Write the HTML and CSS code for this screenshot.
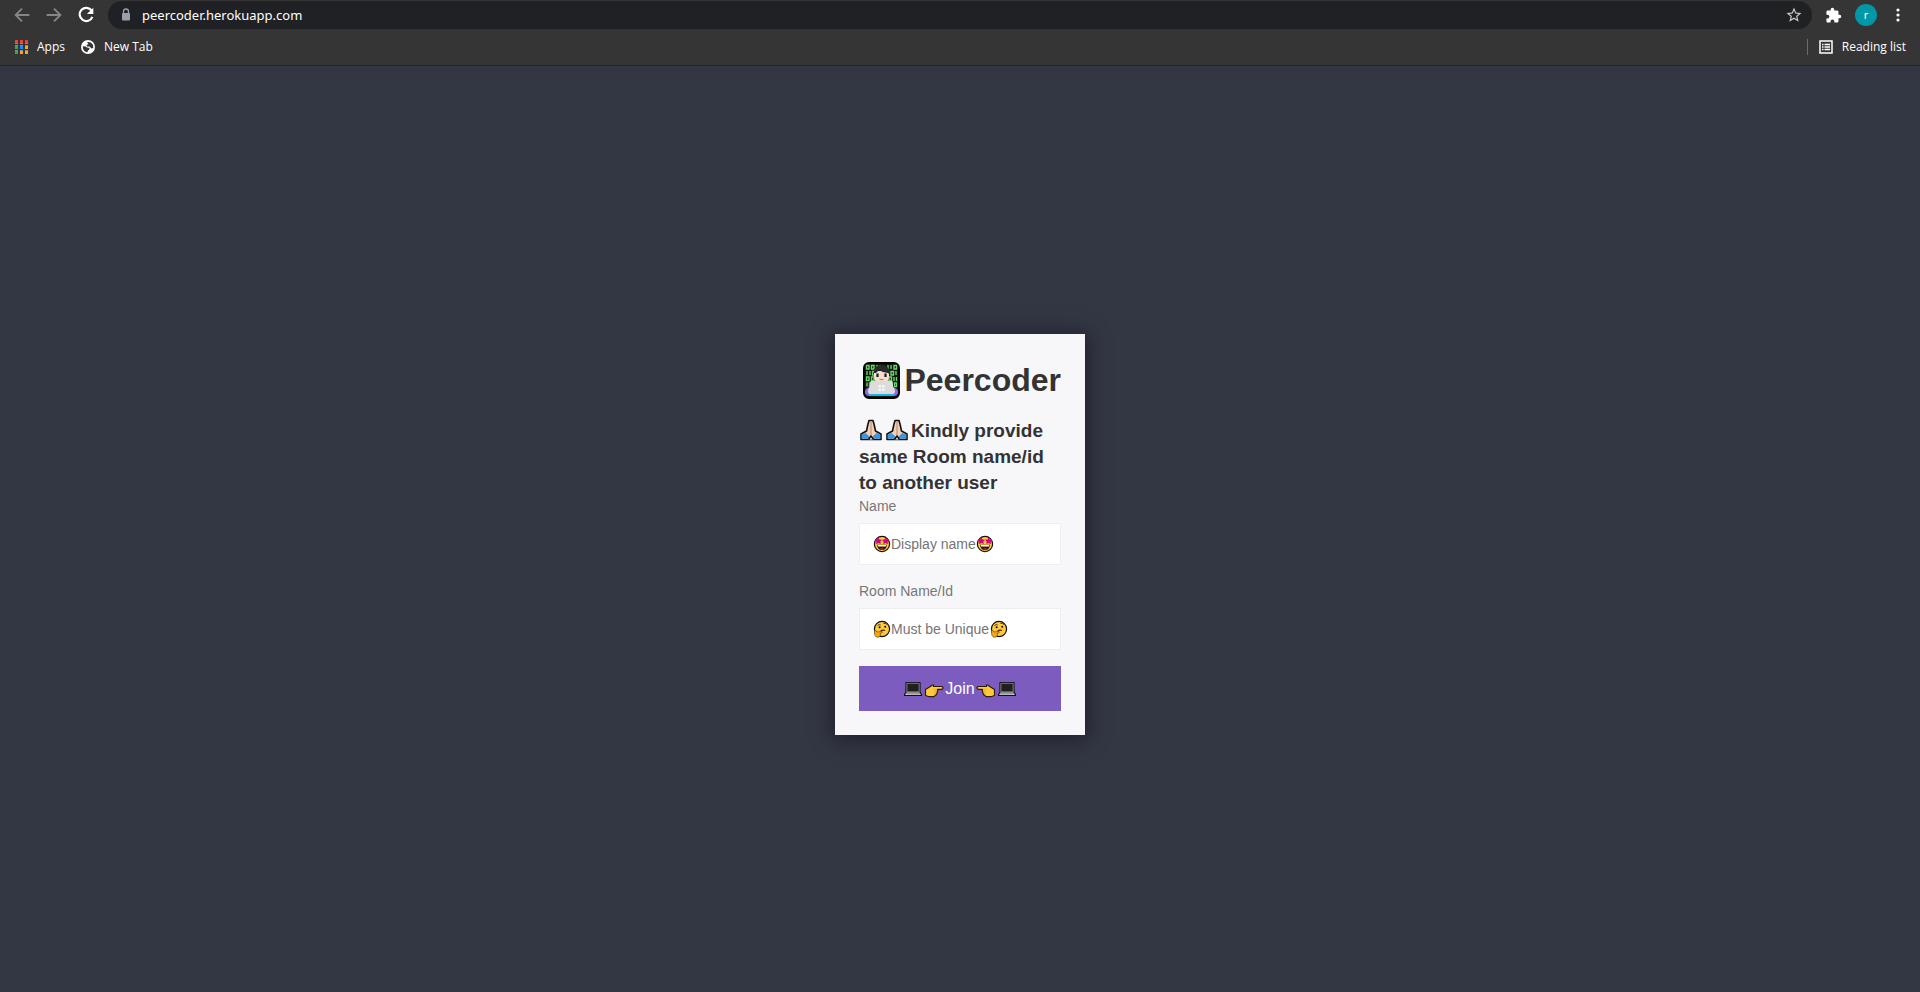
FILE: index.html
```html
<!DOCTYPE html>
<html lang="en">
<head>
<meta charset="utf-8">
<title>Peercoder</title>
<link rel="stylesheet" href="styles.css">
</head>
<body>
<svg class="defs" aria-hidden="true">
  <symbol id="hands" viewBox="0 0 22 22">
    <path d="M9 1.500H13L14 5L15.500 12L21 15V20.500H1V15L6.500 12L8 5Z" fill="#f4cfb8" stroke="#111" stroke-width="1.600" stroke-linejoin="round"/>
    <path d="M1.800 15.500L5.500 14L10 18L8.500 19.800H1.800ZM20.200 15.500L16.500 14L12 18L13.500 19.800H20.200Z" fill="#3a96dd"/>
    <path d="M11 2V16" stroke="#c99c80" stroke-width="1.400"/>
    <path d="M8.500 20.500L11 17L13.500 20.500" fill="#f7f7fa" stroke="#111" stroke-width="1.500"/>
  </symbol>
  <symbol id="star-eyes" viewBox="0 0 18 18">
    <circle cx="9" cy="9" r="7.600" fill="#ffc83d" stroke="#111" stroke-width="1.200"/>
    <path d="M5.300 3L6.300 4.800L8.500 5.100L7 6.500L7.400 8.600L5.400 7.700L3.300 8.800L3.600 6.600L2 5.100L4.300 4.700ZM12.700 3L13.700 4.700L16 5.100L14.400 6.600L14.700 8.800L12.600 7.700L10.600 8.600L11 6.500L9.500 5.100L11.700 4.800Z" fill="#d00080" stroke="#d00080" stroke-width=".6"/>
    <path d="M4 9.800H14Q13.500 15 9 15T4 9.800Z" fill="#2b1710"/>
    <path d="M4.600 10H13.400L12.900 11.600H5.100Z" fill="#fff"/>
    <path d="M7 14Q9 12.500 11 14Q9 15.300 7 14Z" fill="#e8242f"/>
  </symbol>
  <symbol id="thinking" viewBox="0 0 18 18">
    <circle cx="9" cy="9" r="7.600" fill="#ffc83d" stroke="#111" stroke-width="1.200"/>
    <path d="M4.500 5.500Q6 4 7.700 5M10.500 3.500Q12.500 2.800 14 4.500" fill="none" stroke="#5b3a10" stroke-width="1"/>
    <circle cx="6.600" cy="7.200" r="1" fill="#111"/><circle cx="12.200" cy="6.800" r="1" fill="#111"/>
    <path d="M7.500 11.200Q9.500 9.700 12 10.500" fill="none" stroke="#3d2608" stroke-width="1.200"/>
    <path d="M1.500 10.500Q3 9.700 3.700 12L9 11.500Q10.500 12.300 8.500 13L7 13.500Q8.500 16.800 4.500 17.300Q1 17 1.500 10.500Z" fill="#f5a81c" stroke="#6e4607" stroke-width=".7"/>
  </symbol>
  <symbol id="laptop" viewBox="0 0 20 18">
    <path d="M3 2.500H17V12L18.500 14.500V15.500H1.500V14.500L3 12Z" fill="#8d8d8d" stroke="#111" stroke-width="1.200" stroke-linejoin="round"/>
    <path d="M4 3.300H16V11.800H4Z" fill="#202020" stroke="#8a8a8a" stroke-width=".7"/>
    <path d="M2.500 14.300H17.500" stroke="#ccc" stroke-width=".9"/>
  </symbol>
  <symbol id="point" viewBox="0 0 20 18">
    <path d="M1.500 9.500L5.500 7L8.500 5Q10 4.600 9.500 6.500H17.500Q19.300 6.700 19 8.200Q18.800 9.300 17.500 9.300H13.500Q14.300 10.500 13.300 11.300Q13.900 12.500 12.800 13.300Q13 14.800 11.500 15.200L10 16.700H5L1.500 15.500Z" fill="#ffc83d" stroke="#2b1c08" stroke-width="1.200" stroke-linejoin="round"/>
    <path d="M9.500 9.300H13M9.800 11.300H12.500M9.800 13.300H12" stroke="#d99517" stroke-width=".6"/>
  </symbol>
</svg>

<header class="browser">
  <div class="toolbar">
    <nav class="history" aria-label="History">
      <button class="tool dim" aria-label="Back"><svg width="22" height="22" viewBox="0 0 24 24"><path d="M20 12H5M12 5L5 12L12 19" fill="none" stroke="currentColor" stroke-width="2"/></svg></button>
      <button class="tool dim" aria-label="Forward"><svg width="22" height="22" viewBox="0 0 24 24"><path d="M4 12H19M12 5L19 12L12 19" fill="none" stroke="currentColor" stroke-width="2"/></svg></button>
      <button class="tool" aria-label="Reload"><svg width="22" height="22" viewBox="0 0 24 24"><path d="M18.200 7.200A7.200 7.200 0 1 0 19 14" fill="none" stroke="currentColor" stroke-width="2.400"/><path d="M20 4V11H13Z" fill="currentColor"/></svg></button>
    </nav>
    <div class="address">
      <svg class="lock" width="10" height="14" viewBox="0 0 10 14"><path d="M2.500 6V3.500a2.500 2.500 0 0 1 5 0V6" fill="none" stroke="currentColor" stroke-width="1.300"/><rect x="1" y="5" width="8" height="7.500" rx="1" fill="currentColor"/></svg>
      <input class="url" type="text" aria-label="Address" value="peercoder.herokuapp.com">
      <button class="tool star" aria-label="Bookmark"><svg width="18" height="18" viewBox="0 0 24 24"><path fill="currentColor" d="M22 9.240l-7.190-.62L12 2 9.190 8.630 2 9.240l5.460 4.730L5.820 21 12 17.270 18.180 21l-1.630-7.030L22 9.240zM12 15.400l-3.760 2.270 1-4.280-3.320-2.880 4.380-.38L12 6.100l1.710 4.040 4.380.38-3.320 2.880 1 4.280L12 15.400z"/></svg></button>
    </div>
    <div class="actions">
      <button class="tool" aria-label="Extensions"><svg width="17" height="17" viewBox="0 0 24 24"><path fill="currentColor" d="M20.500 11H19V7c0-1.100-.9-2-2-2h-4V3.500a2.500 2.500 0 0 0-5 0V5H4c-1.100 0-2 .9-2 2v3.800h1.500a2.700 2.700 0 0 1 0 5.400H2V20c0 1.100.9 2 2 2h3.800v-1.500a2.700 2.700 0 0 1 5.400 0V22H17c1.100 0 2-.9 2-2v-4h1.500a2.500 2.500 0 0 0 0-5z"/></svg></button>
      <button class="avatar" aria-label="Profile">r</button>
      <button class="tool" aria-label="Menu"><svg width="16" height="16" viewBox="0 0 16 16" fill="currentColor"><circle cx="8" cy="3" r="1.600"/><circle cx="8" cy="8" r="1.600"/><circle cx="8" cy="13" r="1.600"/></svg></button>
    </div>
  </div>
  <nav class="bookmarks" aria-label="Bookmarks">
    <a class="bookmark" href="#"><svg width="13" height="14" viewBox="0 0 13 14"><path fill="#ea4335" d="M0 0h3v3H0zM5 0h3v3H5zM10 0h3v3h-3z"/><path fill="#34a853" d="M0 6h3v3H0zM0 11h3v3H0z"/><path fill="#1a8cff" d="M5 6h3v3H5z"/><path fill="#fbab05" d="M10 6h3v3h-3zM5 11h3v3H5zM10 11h3v3h-3z"/><path fill="#8c8c8c" d="M0 3h3v1H0zM5 3h3v1H5zM10 3h3v1h-3zM0 5h3v1H0zM5 5h3v1H5zM10 5h3v1h-3zM0 10h3v1H0zM5 10h3v1H5zM10 10h3v1h-3z"/></svg>Apps</a>
    <a class="bookmark" href="#"><svg width="14" height="14" viewBox="0 0 14 14"><circle cx="7" cy="7" r="7" fill="#fff"/><path d="M1.700 6.500Q4 5.500 6 7.500L8.500 8Q8.500 10 7 10.500L6.500 12.300Q2 12 1.700 6.500ZM6 2.300Q10 1 12 5L12.300 8L10.500 8.500L8.500 6.500H6L5.500 5L7.500 4Z" fill="#353535"/></svg>New Tab</a>
    <a class="bookmark reading" href="#"><svg width="14" height="14" viewBox="0 0 14 14"><rect x="1" y="1" width="12" height="12" fill="none" stroke="#fff" stroke-width="1.500"/><path d="M3 4.500h1.500M5.500 4.500H11M3 7h1.500M5.500 7H11M3 9.500h1.500M5.500 9.500H11" stroke="#fff" stroke-width="1.300"/></svg>Reading list</a>
  </nav>
</header>

<main class="page">
  <form class="card">
    <h1 class="title">
      <svg width="37" height="37" viewBox="0 0 37 37" aria-hidden="true">
        <rect x="1" y="1" width="35" height="35" rx="5" fill="#0b160d" stroke="#050505" stroke-width="2"/>
        <g fill="none" stroke="#6fd468" stroke-width="1.400">
          <path d="M3.500 3.500h2.500v3.500H3.500zM8.500 3.500h2.500v3.500H8.500zM3.500 15h2.500v3.500H3.500zM8.500 15h2.500v3.500H8.500zM31 3.500h2.500v3.500H31zM26 15h2.500v3.500H26zM14 3v4M17 3v4M25 3v4M28 3v4M4 9v4M7 9v4M9.500 9.500h2.500v3.500H9.500zM25.500 9v4M28 9.500h2.500v3.500H28zM33 9v4M31 15v4M33.500 15v4M4 20.500v4M6.500 21h2v3.500h-2zM29 20.500v4M31.500 21h2v3.500h-2z"/>
        </g>
        <path d="M2 31Q1 26 8 25H29Q36 26 35 31Q34 34 31 34H6Q3 34 2 31Z" fill="#886ce4"/>
        <path d="M5 30Q5 25 9 24H28Q32 25 32 30L30 33H7Z" fill="#f4dccb"/>
        <path d="M11 9H26V15Q26 21 18.500 21T11 15Z" fill="#f7dece"/>
        <path d="M11 11Q10 4 18 3Q27 3 27 13L25 11Q20 11 16 8L13 11Z" fill="#29282b"/>
        <path d="M14.500 11.500v3.500M22.500 11.500v3.500" stroke="#1b1b1b" stroke-width="2.200"/>
        <path d="M16.500 17q2 1.300 4 0" fill="none" stroke="#c47c60" stroke-width="1.100"/>
        <path d="M7.500 19H29.500L31 32H6Z" fill="#dcdcdc"/>
        <path d="M15.500 23H18V25.500H15.500ZM19 23H21.500V25.500H19ZM15.500 26.500H18V29H15.500ZM19 26.500H21.500V29H19Z" fill="#f5f5f5"/>
        <path d="M6 33H31" stroke="#18b5e8" stroke-width="2"/>
      </svg>
      Peercoder
    </h1>
    <h2 class="notice"><svg class="emoji" aria-hidden="true"><use href="#hands"/></svg><svg class="emoji" aria-hidden="true"><use href="#hands"/></svg>Kindly provide same Room name/id to another user</h2>
    <label class="label" for="name">Name</label>
    <div class="field">
      <input class="input" id="name" type="text" placeholder="Display name">
      <svg class="mark lead" aria-hidden="true"><use href="#star-eyes"/></svg>
      <svg class="mark after-name" aria-hidden="true"><use href="#star-eyes"/></svg>
    </div>
    <label class="label" for="room">Room Name/Id</label>
    <div class="field">
      <input class="input" id="room" type="text" placeholder="Must be Unique">
      <svg class="mark lead" aria-hidden="true"><use href="#thinking"/></svg>
      <svg class="mark after-room" aria-hidden="true"><use href="#thinking"/></svg>
    </div>
    <button class="join" type="button"><svg class="glyph"><use href="#laptop"/></svg><svg class="glyph"><use href="#point"/></svg>Join<svg class="glyph flip"><use href="#point"/></svg><svg class="glyph"><use href="#laptop"/></svg></button>
  </form>
</main>
</body>
</html>
```

FILE: styles.css
```css
* { box-sizing: border-box; }

body {
  margin: 0;
  min-height: 100vh;
  display: flex;
  flex-direction: column;
  background: #333744;
  font-family: "Liberation Sans", Arial, sans-serif;
}

button, input { font-family: inherit; border: 0; margin: 0; padding: 0; }
svg { display: block; flex: none; }
.defs { display: none; }

/* Browser bars */
.browser {
  background: #353535;
  border-bottom: 1px solid #232323;
  color: #fff;
  font-family: "Noto Sans", "Open Sans", sans-serif;
}
.toolbar {
  display: flex;
  align-items: center;
  padding: 1px 14px 0 11px;
}
.history { display: flex; gap: 10px; margin-right: 11px; }
.tool { display: flex; background: none; color: #fff; }
.dim { color: #868686; }
.address {
  flex: 1;
  display: flex;
  align-items: center;
  height: 28px;
  padding: 0 9px 0 13px;
  border-radius: 14px;
  background: #202124;
}
.lock { color: #9aa0a6; }
.url {
  flex: 1;
  margin-left: 11px;
  background: none;
  color: #fff;
  font-size: 13px;
}
.star { color: #c8c8c8; }
.actions { display: flex; align-items: center; gap: 13px; margin-left: 13px; }
.avatar {
  width: 22px;
  height: 22px;
  border-radius: 50%;
  background: #0097a7;
  color: #fff;
  font-size: 11px;
  line-height: 20px;
}
.bookmarks {
  display: flex;
  align-items: center;
  gap: 16px;
  height: 36px;
  padding: 0 14px 0 15px;
}
.bookmark {
  display: flex;
  align-items: center;
  gap: 9px;
  color: #fff;
  font-family: "Open Sans", "Noto Sans", sans-serif;
  font-size: 12px;
  line-height: 16px;
  text-decoration: none;
}
.reading { margin-left: auto; padding-left: 11px; border-left: 1px solid #6b6b6b; }

/* Join form */
.page {
  flex: 1;
  display: grid;
  place-items: center;
  padding-top: 11px;
}
.card {
  width: 250px;
  padding: 24px;
  background: #f7f7fa;
  box-shadow: 0 2px 18px 3px rgba(20, 16, 28, 0.6);
  color: #333;
}
.title {
  display: flex;
  align-items: center;
  justify-content: flex-end;
  gap: 4px;
  margin: 0 0 16px;
  font-size: 32px;
  line-height: 44px;
}
.notice { margin: 0; font-size: 19px; line-height: 26px; }
.emoji {
  display: inline-block;
  width: 24px;
  height: 22px;
  margin-right: 2px;
  vertical-align: -4px;
}
.label {
  display: block;
  margin-bottom: 7px;
  color: #777;
  font-size: 14px;
  line-height: 20px;
}
.field { position: relative; margin-bottom: 16px; }
.input {
  display: block;
  width: 100%;
  height: 42px;
  padding: 0 12px 0 31px;
  border: 1px solid #eee;
  background: #fff;
  color: #333;
  font-size: 14px;
}
.input::placeholder { color: #757575; opacity: 1; }
.mark { position: absolute; top: 12px; width: 18px; height: 18px; pointer-events: none; }
.lead { left: 14px; }
.after-name { left: 117px; }
.after-room { left: 131px; }
.input:not(:placeholder-shown) ~ .mark { display: none; }
.join {
  display: flex;
  align-items: center;
  justify-content: center;
  gap: 1px;
  width: 100%;
  height: 45px;
  background: #7c5cbf;
  color: #fff;
  font-size: 16px;
}
.glyph { width: 20px; height: 18px; }
.flip { transform: scaleX(-1); }
```
